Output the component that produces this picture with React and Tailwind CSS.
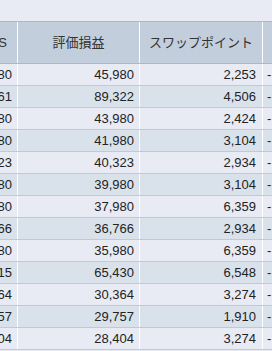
const rows = [
  { total: '48,180', pl: '45,980', swap: '2,253' },
  { total: '93,861', pl: '89,322', swap: '4,506' },
  { total: '46,380', pl: '43,980', swap: '2,424' },
  { total: '45,080', pl: '41,980', swap: '3,104' },
  { total: '43,223', pl: '40,323', swap: '2,934' },
  { total: '43,080', pl: '39,980', swap: '3,104' },
  { total: '44,380', pl: '37,980', swap: '6,359' },
  { total: '39,666', pl: '36,766', swap: '2,934' },
  { total: '42,380', pl: '35,980', swap: '6,359' },
  { total: '71,915', pl: '65,430', swap: '6,548' },
  { total: '33,664', pl: '30,364', swap: '3,274' },
  { total: '31,657', pl: '29,757', swap: '1,910' },
  { total: '31,704', pl: '28,404', swap: '3,274' },
]

export default function App() {
  return (
    <div className="w-[272px] h-[351px] overflow-hidden bg-[#e8ebf3] pt-[21px] text-[13px] text-[#222] font-['Liberation_Sans','Noto_Sans_CJK_JP',sans-serif]">
      {/* table is scrolled sideways, first column mostly hidden */}
      <div className="-ml-[104px] w-max">
        <div className="flex h-[43px] border-y border-[#aab8cc] bg-[#c3cedc] text-[#333]">
          <div className="w-[122px] border-r border-white flex items-center justify-end pr-[10px]">損益PIPS</div>
          <div className="w-[122px] border-r border-white flex items-center justify-center">評価損益</div>
          <div className="w-[123px] border-r border-white flex items-center justify-center">スワップポイント</div>
          <div className="w-[120px] flex items-center justify-center">備考</div>
        </div>
        {rows.map((r, i) => (
          <div
            key={i}
            className={`flex h-[22px] border-b border-[#bfc9d8] ${i % 2 === 0 ? 'bg-[#e8ebf3]' : 'bg-[#d9e2eb]'}`}
          >
            <div className="w-[122px] border-r border-white flex items-center justify-end pr-[5px]">{r.total}</div>
            <div className="w-[122px] border-r border-white flex items-center justify-end pr-[5px]">{r.pl}</div>
            <div className="w-[123px] border-r border-white flex items-center justify-end pr-[6px]">{r.swap}</div>
            <div className="w-[120px] flex items-center pl-[4px]">-</div>
          </div>
        ))}
      </div>
    </div>
  )
}
